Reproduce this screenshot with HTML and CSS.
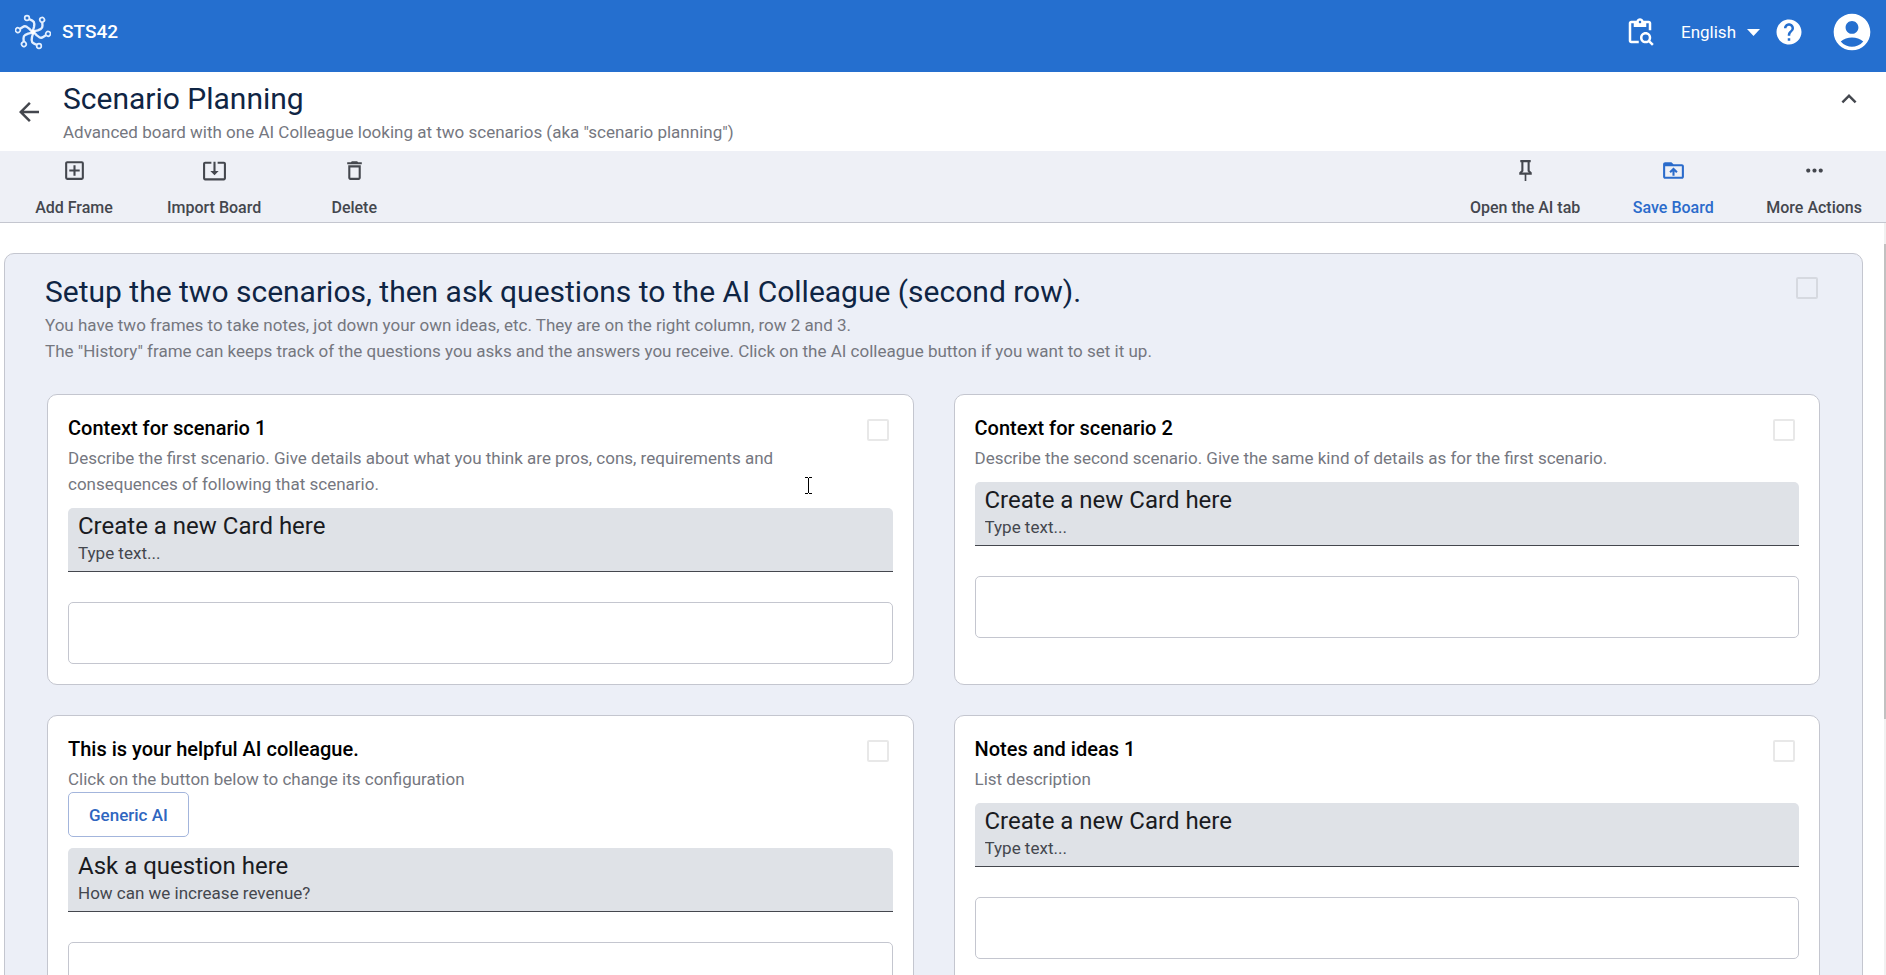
FILE: index.html
```
<!DOCTYPE html>
<html lang="en">
<head>
  <meta charset="utf-8">
  <title>STS42 – Scenario Planning</title>
  <link rel="stylesheet" href="styles.css">
</head>
<body>
  <header class="app-bar">
    <svg class="logo" viewBox="-54 -54 108 108" aria-hidden="true">
      <defs>
        <g id="arm">
          <circle cx="-18" cy="-42" r="7" stroke-width="5"/>
          <path d="M-12 -39L-2 -34Q4 -31 4 -24L3 -15L0 -5" stroke-width="7"/>
        </g>
      </defs>
      <g fill="none" stroke="#e3efff" stroke-linejoin="round">
        <use href="#arm"/>
        <use href="#arm" transform="rotate(60)"/>
        <use href="#arm" transform="rotate(120)"/>
        <use href="#arm" transform="rotate(180)"/>
        <use href="#arm" transform="rotate(240)"/>
        <use href="#arm" transform="rotate(300)"/>
      </g>
      <circle r="7" fill="#fff"/>
    </svg>
    <span class="brand">STS42</span>
    <div class="app-actions">
      <button class="icon-button" type="button" aria-label="Search clipboard">
        <svg class="icon-lg" viewBox="0 0 24 24"><path d="M5 5h2v3h10V5h2v5.500h2V5c0-1.100-.9-2-2-2h-4.180C14.400 1.840 13.300 1 12 1s-2.400.84-2.820 2H5c-1.100 0-2 .9-2 2v14c0 1.100.9 2 2 2h6v-2H5V5zm7-2c.55 0 1 .45 1 1s-.45 1-1 1-1-.45-1-1 .45-1 1-1z"/><path d="M20.300 18.900c.4-.7.7-1.500.7-2.400 0-2.500-2-4.500-4.500-4.500S12 14 12 16.500s2 4.500 4.500 4.500c.9 0 1.700-.3 2.400-.7l2.700 2.700 1.400-1.400-2.700-2.700zm-3.800.1a2.500 2.500 0 0 1 0-5 2.500 2.500 0 0 1 0 5z"/></svg>
      </button>
      <div class="language">
        <select class="language-select" aria-label="Language"><option>English</option></select>
        <svg class="caret" viewBox="0 0 13 7"><path d="M0 0h13L6.500 7z"/></svg>
      </div>
      <button class="icon-button help" type="button" aria-label="Help">
        <svg class="icon-lg" viewBox="0 0 24 24"><path d="M12 2C6.480 2 2 6.480 2 12s4.480 10 10 10 10-4.480 10-10S17.520 2 12 2zm1 17h-2v-2h2v2zm2.070-7.750l-.9.92C13.450 12.900 13 13.500 13 15h-2v-.5c0-1.100.45-2.100 1.170-2.830l1.240-1.260c.37-.36.59-.86.59-1.410 0-1.100-.9-2-2-2s-2 .9-2 2H8c0-2.210 1.790-4 4-4s4 1.790 4 4c0 .88-.36 1.680-.93 2.250z"/></svg>
      </button>
      <button class="icon-button" type="button" aria-label="Account">
        <svg class="icon-xl" viewBox="0 0 24 24"><path d="M12 2C6.480 2 2 6.480 2 12s4.480 10 10 10 10-4.480 10-10S17.520 2 12 2zm0 4c1.930 0 3.500 1.570 3.500 3.500S13.930 13 12 13s-3.500-1.570-3.500-3.500S10.070 6 12 6zm0 14c-2.030 0-4.430-.82-6.140-2.880C7.550 15.800 9.680 15 12 15s4.450.8 6.140 2.120C16.430 19.180 14.030 20 12 20z"/></svg>
      </button>
    </div>
  </header>

  <section class="title-bar">
    <button class="icon-button" type="button" aria-label="Back">
      <svg class="icon-lg" viewBox="0 0 24 24"><path d="M20 11H7.830l5.590-5.590L12 4l-8 8 8 8 1.410-1.410L7.830 13H20v-2z"/></svg>
    </button>
    <div class="title-text">
      <h1 class="heading">Scenario Planning</h1>
      <p class="description">Advanced board with one AI Colleague looking at two scenarios (aka "scenario planning")</p>
    </div>
    <button class="icon-button collapse" type="button" aria-label="Collapse">
      <svg class="icon-lg" viewBox="0 0 24 24"><path d="M12 8l-6 6 1.410 1.410L12 10.830l4.590 4.580L18 14z"/></svg>
    </button>
  </section>

  <nav class="toolbar" aria-label="Board actions">
    <button class="tool" type="button">
      <svg class="icon" viewBox="0 0 24 24"><path d="M19 19V5H5v14h14m0-16a2 2 0 0 1 2 2v14a2 2 0 0 1-2 2H5a2 2 0 0 1-2-2V5c0-1.110.9-2 2-2h14m-8 4h2v4h4v2h-4v4h-2v-4H7v-2h4V7z"/></svg>
      Add Frame
    </button>
    <button class="tool" type="button">
      <svg class="icon" viewBox="0 0 24 24"><path d="M12 16.500l4-4h-3v-9h-2v9H8l4 4zm9-13h-6v1.990h6v14.030H3V5.490h6V3.500H3c-1.100 0-2 .9-2 2v14c0 1.100.9 2 2 2h18c1.100 0 2-.9 2-2v-14c0-1.100-.9-2-2-2z"/></svg>
      Import Board
    </button>
    <button class="tool" type="button">
      <svg class="icon" viewBox="0 0 24 24"><path d="M16 9v10H8V9h8m-1.500-6h-5l-1 1H5v2h14V4h-3.500l-1-1zM18 7H6v12c0 1.100.9 2 2 2h8c1.100 0 2-.9 2-2V7z"/></svg>
      Delete
    </button>
    <span class="spacer"></span>
    <button class="tool" type="button">
      <svg class="icon" viewBox="0 0 24 24"><path d="M16 12V4h1V2H7v2h1v8l-2 2v2h5.200v6h1.600v-6H18v-2l-2-2m-7.200 2l1.200-1.200V4h4v8.800l1.200 1.200H8.800z"/></svg>
      Open the AI tab
    </button>
    <button class="tool tool-primary" type="button">
      <svg class="icon" viewBox="0 0 24 24"><path d="M20 6h-8l-2-2H4c-1.100 0-1.990.9-1.990 2L2 18c0 1.100.9 2 2 2h16c1.100 0 2-.9 2-2V8c0-1.100-.9-2-2-2zm0 12H4V8h16v10zM9.410 14.420L11 12.840V17h2v-4.160l1.590 1.590L16 13.010 12.010 9 8 13.010l1.410 1.410z"/></svg>
      Save Board
    </button>
    <button class="tool" type="button">
      <svg class="icon" viewBox="0 0 24 24"><path d="M6 10c-1.100 0-2 .9-2 2s.9 2 2 2 2-.9 2-2-.9-2-2-2zm12 0c-1.100 0-2 .9-2 2s.9 2 2 2 2-.9 2-2-.9-2-2-2zm-6 0c-1.100 0-2 .9-2 2s.9 2 2 2 2-.9 2-2-.9-2-2-2z"/></svg>
      More Actions
    </button>
  </nav>

  <main class="workspace">
    <section class="board">
      <div class="board-header">
        <div>
          <h2 class="heading">Setup the two scenarios, then ask questions to the AI Colleague (second row).</h2>
          <p class="description">You have two frames to take notes, jot down your own ideas, etc. They are on the right column, row 2 and 3.<br>The "History" frame can keeps track of the questions you asks and the answers you receive. Click on the AI colleague button if you want to set it up.</p>
        </div>
        <input class="check" type="checkbox" aria-label="Select board">
      </div>

      <div class="frames">
        <article class="frame">
          <div class="frame-header">
            <div class="frame-text">
              <h3 class="frame-title">Context for scenario 1</h3>
              <p class="description">Describe the first scenario. Give details about what you think are pros, cons, requirements and consequences of following that scenario.</p>
            </div>
            <input class="check" type="checkbox" aria-label="Select Context for scenario 1">
            <svg class="text-cursor" viewBox="0 0 7 17" aria-hidden="true"><path d="M0 .5h3M4 .5h3M3.500 1v15M0 16.500h3M4 16.500h3"/></svg>
          </div>
          <label class="field">
            <span class="field-label">Create a new Card here</span>
            <input class="field-input" type="text" placeholder="Type text...">
          </label>
          <div class="card-slot"></div>
        </article>

        <article class="frame">
          <div class="frame-header">
            <div class="frame-text">
              <h3 class="frame-title">Context for scenario 2</h3>
              <p class="description">Describe the second scenario. Give the same kind of details as for the first scenario.</p>
            </div>
            <input class="check" type="checkbox" aria-label="Select Context for scenario 2">
          </div>
          <label class="field">
            <span class="field-label">Create a new Card here</span>
            <input class="field-input" type="text" placeholder="Type text...">
          </label>
          <div class="card-slot"></div>
        </article>

        <article class="frame">
          <div class="frame-header">
            <div class="frame-text">
              <h3 class="frame-title">This is your helpful AI colleague.</h3>
              <p class="description">Click on the button below to change its configuration</p>
            </div>
            <input class="check" type="checkbox" aria-label="Select AI colleague">
          </div>
          <button class="outlined-button" type="button">Generic AI</button>
          <label class="field">
            <span class="field-label">Ask a question here</span>
            <input class="field-input" type="text" placeholder="How can we increase revenue?">
          </label>
          <div class="card-slot"></div>
        </article>

        <article class="frame">
          <div class="frame-header">
            <div class="frame-text">
              <h3 class="frame-title">Notes and ideas 1</h3>
              <p class="description">List description</p>
            </div>
            <input class="check" type="checkbox" aria-label="Select Notes and ideas 1">
          </div>
          <label class="field">
            <span class="field-label">Create a new Card here</span>
            <input class="field-input" type="text" placeholder="Type text...">
          </label>
          <div class="card-slot"></div>
        </article>
      </div>
    </section>
    <div class="rail"><div class="rail-thumb"></div></div>
  </main>
</body>
</html>
```
FILE: styles.css
```
* { box-sizing: border-box; }

body {
  margin: 0;
  height: 100vh;
  display: flex;
  flex-direction: column;
  overflow: hidden;
  background: #fff;
  color: #1a1b1f;
  font-family: Roboto, "Liberation Sans", sans-serif;
  font-size: 17px;
}

h1, h2, h3, p { margin: 0; }

button, input, select { font: inherit; color: inherit; }

svg { display: block; fill: currentColor; }

.icon { width: 25px; height: 25px; }
.icon-lg { width: 30px; height: 30px; }
.icon-xl { width: 44px; height: 44px; }

.icon-button {
  padding: 0;
  border: 0;
  background: none;
  color: #44474e;
}

/* App bar */
.app-bar {
  flex: none;
  display: flex;
  align-items: center;
  padding: 10px 12px 18px 15px;
  background: #256fcf;
  color: #fff;
}

.app-bar .icon-button { color: #fff; }

.logo { width: 36px; height: 36px; }

.brand {
  margin-left: 11px;
  font-size: 19px;
  font-weight: 500;
  line-height: 24px;
}

.app-actions {
  margin-left: auto;
  display: flex;
  align-items: center;
}

.language {
  display: flex;
  align-items: center;
  gap: 10px;
  margin: 0 14px 0 26px;
}

.language-select {
  appearance: none;
  padding: 0;
  border: 0;
  background: none;
}

.caret { width: 13px; height: 7px; }

.help { margin-right: 26px; }

/* Title bar */
.title-bar {
  flex: none;
  display: flex;
  align-items: center;
  padding: 7px 22px 6px 14px;
}

.title-text { margin-left: 19px; }

.heading {
  font-size: 30px;
  font-weight: 400;
  line-height: 40px;
  color: #0f2544;
}

.collapse {
  align-self: flex-start;
  margin: 5px 0 0 auto;
}

/* Toolbar */
.toolbar {
  flex: none;
  display: flex;
  padding: 0 1px 0 4px;
  background: #eef0f6;
  border-bottom: 1px solid #c4c6cf;
}

.tool {
  min-width: 140px;
  padding: 7px 23px 2px;
  display: flex;
  flex-direction: column;
  align-items: center;
  gap: 13px;
  border: 0;
  background: none;
  color: #44474e;
  font-size: 16px;
  font-weight: 500;
  line-height: 24px;
}

.tool-primary { color: #2a6bcb; }

.spacer { flex: 1; }

/* Workspace */
.workspace {
  flex: 1;
  min-height: 0;
  display: flex;
  overflow: hidden;
}

.board {
  flex: 1;
  align-self: flex-start;
  margin: 30px 21px 30px 4px;
  padding: 18px 40px 30px;
  background: #eceff7;
  border: 1px solid #c4c6cf;
  border-radius: 10px;
}

.board-header {
  display: flex;
  justify-content: space-between;
  padding-right: 4px;
}

.description {
  line-height: 26px;
  color: #75777f;
}

.check {
  appearance: none;
  flex: none;
  width: 22px;
  height: 22px;
  margin: 5px 0 0;
  border: 2px solid rgba(0, 0, 0, 0.09);
  border-radius: 2px;
}

.frames {
  display: grid;
  grid-template-columns: 1fr 1fr;
  gap: 30px 40px;
  margin-top: 30px;
  padding: 0 2px;
}

.frame {
  padding: 19px 20px 20px;
  background: #fff;
  border: 1px solid #c4c6cf;
  border-radius: 10px;
}

.frame-header {
  position: relative;
  display: flex;
  justify-content: space-between;
  padding-right: 4px;
}

.frame-text { padding-right: 16px; }

.frame-title {
  margin-bottom: 3px;
  font-size: 20px;
  font-weight: 500;
  line-height: 28px;
  color: #000;
}

/* Mouse pointer resting over the first frame */
.text-cursor {
  position: absolute;
  right: 81px;
  bottom: 3px;
  width: 7px;
  height: 17px;
  fill: none;
  stroke: #000;
}

.outlined-button {
  display: block;
  height: 45px;
  padding: 0 20px;
  border: 1px solid #a3b5dc;
  border-radius: 5px;
  background: #fff;
  color: #2f66c0;
  font-weight: 500;
}

.field {
  display: flex;
  flex-direction: column;
  margin-top: 11px;
  padding: 2px 10px 7px;
  background: #dfe2e7;
  border-bottom: 1px solid #44474e;
  border-radius: 5px 5px 0 0;
}

.field-label {
  font-size: 24px;
  line-height: 32px;
}

.field-input {
  width: 100%;
  height: 22px;
  padding: 0;
  border: 0;
  background: none;
}

.field-input::placeholder { color: #44474e; opacity: 1; }

.card-slot {
  height: 62px;
  margin-top: 30px;
  border: 1px solid #c4c6cf;
  border-radius: 5px;
}

/* Scroll rail */
.rail {
  flex: none;
  width: 2px;
  padding-top: 21px;
  background: #f1f1f1;
}

.rail-thumb {
  height: 65%;
  background: #c1c1c1;
}
```
